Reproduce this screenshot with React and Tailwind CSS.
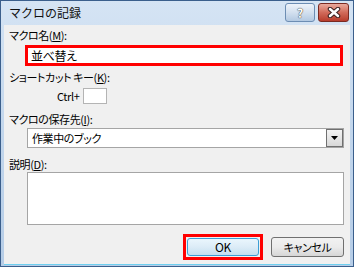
export default function App() {
  const font = { fontFamily: '"Noto Sans CJK JP", "Noto Sans", sans-serif' }
  return (
    <div
      className="w-[354px] h-[267px] flex flex-col border border-[#3b5f8c] bg-gradient-to-b from-[#d5e4f4] via-[#c2d6ec] to-[#b6cde7] text-black"
      style={font}
    >
      {/* title bar */}
      <div className="h-[24px] flex items-center pl-[8px] pr-[4px]">
        <span className="text-[12px] leading-none text-[#111]">マクロの記録</span>
        <div className="ml-auto flex items-start gap-[3px] self-start mt-[2px]">
          <div className="w-[30px] h-[19px] rounded-[3px] border border-[#6c8db3] bg-gradient-to-b from-[#eef3fa] via-[#d3e0ef] to-[#b3c9e2] flex items-center justify-center">
            <span className="text-[12px] font-bold leading-none text-white [text-shadow:0_0_1px_#333,0_0_1px_#333]">?</span>
          </div>
          <div className="w-[31px] h-[19px] rounded-[3px] border border-[#7a2a22] bg-gradient-to-b from-[#e9a99c] via-[#d16a5a] to-[#b83c2c] flex items-center justify-center">
            <svg width="14" height="11" viewBox="0 0 14 11">
              <path d="M3 2 L11 9 M11 2 L3 9" stroke="#3a2020" strokeWidth="4.5" strokeLinecap="round" />
              <path d="M3 2 L11 9 M11 2 L3 9" stroke="#ffffff" strokeWidth="2.5" strokeLinecap="round" />
            </svg>
          </div>
        </div>
      </div>

      {/* body */}
      <div className="flex-1 mx-[3px] mb-[1px] bg-[#f0f0f0] border-b border-[#6fd0f0] flex flex-col text-[11px] leading-[14px] tracking-[-0.4px] [font-feature-settings:'palt']">
        <div className="mt-[3px] pl-[5px]">
          マクロ名(<span className="underline">M</span>):
        </div>
        <div className="mt-[3px] ml-[21px] w-[318px] h-[21px] border-[3px] border-[#ff0000] bg-white flex items-center pl-[3px] text-[12px]">
          並べ替え
        </div>
        <div className="mt-[4px] pl-[5px]">
          ショートカット キー(<span className="underline">K</span>):
        </div>
        <div className="mt-[4px] flex items-center pl-[53px] gap-[4px]">
          <span>Ctrl+</span>
          <div className="w-[24px] h-[16px] border border-[#b4b4b4] bg-white" />
        </div>
        <div className="mt-[8px] pl-[5px]">
          マクロの保存先(<span className="underline">I</span>):
        </div>
        <div className="mt-[2px] ml-[23px] w-[317px] h-[20px] border border-[#a5a5a5] bg-white flex items-stretch">
          <span className="flex-1 pl-[4px] flex items-center">作業中のブック</span>
          <div className="w-[17px] border border-[#707070] bg-gradient-to-b from-[#f4f4f4] to-[#d8d8d8] flex items-center justify-center">
            <svg width="7" height="4" viewBox="0 0 7 4">
              <path d="M0 0 H7 L3.5 4 Z" fill="#000" />
            </svg>
          </div>
        </div>
        <div className="mt-[9px] pl-[5px]">
          説明(<span className="underline">D</span>):
        </div>
        <div className="mt-[1px] ml-[23px] w-[317px] h-[53px] border border-[#a5a5a5] bg-white" />
        <div className="mt-[9px] flex items-center justify-end pr-[6px] gap-[8px]">
          <div className="w-[80px] h-[26px] border-[3px] border-[#ff0000] p-px">
            <div className="w-full h-full rounded-[3px] border border-[#3c9fd6] bg-gradient-to-b from-[#eaf6fd] via-[#dcecf7] to-[#c4dfef] flex items-center justify-center text-[12px]">
              OK
            </div>
          </div>
          <div className="w-[73px] h-[20px] rounded-[3px] border border-[#707070] bg-gradient-to-b from-[#f2f2f2] via-[#ebebeb] to-[#d6d6d6] flex items-center justify-center">
            キャンセル
          </div>
        </div>
      </div>
    </div>
  )
}
